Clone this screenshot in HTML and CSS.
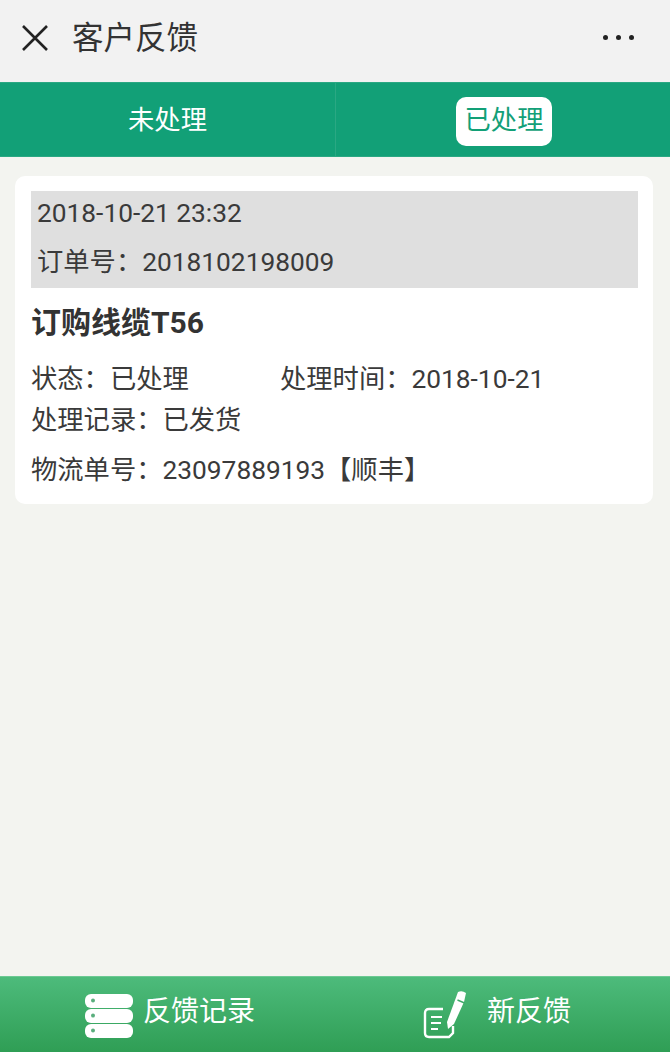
FILE: index.html
```html
<!DOCTYPE html>
<html lang="zh-CN">
<head>
    <meta charset="UTF-8">
    <title>客户反馈</title>
    <link rel="stylesheet" href="styles.css">
</head>
<body>

    <header class="topbar">
        <svg class="close-icon" width="30" height="30" viewBox="0 0 30 30">
            <path d="M3 3 L27 27 M27 3 L3 27" stroke="#222" stroke-width="2.6" fill="none"/>
        </svg>
        <div class="page-title">客户反馈</div>
        <div class="more">
            <span class="dot"></span>
            <span class="dot"></span>
            <span class="dot"></span>
        </div>
    </header>

    <nav class="tabs">
        <div class="tab tab-first"><span class="tab-label">未处理</span></div>
        <div class="tab"><span class="tab-label active">已处理</span></div>
    </nav>

    <main class="content">
        <div class="card">
            <div class="card-head">
                <div class="head-line">2018-10-21 23:32</div>
                <div class="head-line">订单号：2018102198009</div>
            </div>
            <div class="card-title">订购线缆T56</div>
            <div class="status-row">
                <div class="status-cell">状态：已处理</div>
                <div>处理时间：2018-10-21</div>
            </div>
            <div class="record-row">处理记录：已发货</div>
            <div class="ship-row">物流单号：23097889193【顺丰】</div>
        </div>
    </main>

    <footer class="bottombar">
        <div class="bottom-btn btn-left">
            <svg class="list-icon" width="48" height="44" viewBox="0 0 48 44">
                <g fill="#fff">
                    <rect x="0" y="0" width="48" height="14" rx="6"/>
                    <rect x="0" y="15" width="48" height="14" rx="6"/>
                    <rect x="0" y="30" width="48" height="14" rx="6"/>
                </g>
                <g fill="#5aae7d">
                    <circle cx="8" cy="6.5" r="2"/>
                    <circle cx="8" cy="21.5" r="2"/>
                    <circle cx="8" cy="36.5" r="2"/>
                </g>
            </svg>
            <span class="btn-text">反馈记录</span>
        </div>
        <div class="bottom-btn btn-right">
            <svg width="44" height="50" viewBox="0 0 44 50">
                <path d="M20 19 H6 Q2 19 2 23 V43 Q2 47 6 47 H26 L30 43 V36" stroke="#fff" stroke-width="2.4" fill="none"/>
                <path d="M8 27 H19 M8 33 H18 M8 39 H15" stroke="#fff" stroke-width="2.2" fill="none"/>
                <path d="M35 2 Q39 0 43 3 L41 12 L31 34 L25 39 L24 32 Z" fill="#fff"/>
                <path d="M34.5 10 L41.5 13" stroke="#3dab68" stroke-width="1.4" fill="none"/>
            </svg>
            <span class="btn-text">新反馈</span>
        </div>
    </footer>

</body>
</html>
```

FILE: styles.css
```css
* {
    box-sizing: border-box;
}
html, body {
    height: 100%;
}
body {
    margin: 0;
    display: flex;
    flex-direction: column;
    font-family: Roboto, "Noto Sans CJK SC", sans-serif;
    background-color: #f3f4f0;
    color: #3a3a3a;
}
.topbar {
    height: 82px;
    display: flex;
    align-items: center;
    padding: 0 36px 7px 20px;
    background-color: #f2f2f2;
}
.page-title {
    margin-left: 22px;
    padding-top: 3px;
    font-size: 31.5px;
    line-height: 40px;
    color: #333;
}
.more {
    margin-left: auto;
    display: flex;
    gap: 8px;
}
.dot {
    width: 5px;
    height: 5px;
    border-radius: 50%;
    background-color: #222;
}
.tabs {
    height: 75px;
    display: flex;
    background-color: #12a077;
    border-top: 1px solid #2aa883;
    border-bottom: 1px solid #2aa883;
}
.tab {
    flex: 1;
    display: flex;
    align-items: center;
    justify-content: center;
    font-size: 26.3px;
    color: #fff;
}
.tab-first {
    flex: none;
    width: 336px;
    border-right: 1px solid #2aa883;
}
.tab-label {
    margin-top: 3px;
    padding: 5px 9px 7px;
    line-height: 37px;
}
.tab-label.active {
    margin-left: 2px;
    background-color: #fff;
    color: #12a077;
    border-radius: 10px;
}
.content {
    flex: 1;
    padding: 19px 17px 0 15px;
}
.card {
    height: 328px;
    padding: 15px 15px 0 16px;
    background: #fff;
    border-radius: 10px;
    font-size: 26.3px;
}
.card-head {
    height: 97px;
    padding: 0 6px;
    background-color: #dfdfdf;
}
.head-line {
    height: 48px;
    line-height: 45px;
}
.head-line + .head-line {
    line-height: 46px;
}
.card-title {
    margin-top: 14px;
    height: 41px;
    line-height: 41px;
    font-size: 30px;
    font-weight: bold;
    color: #333;
}
.status-row {
    display: flex;
    margin-top: 16px;
    line-height: 41px;
}
.status-cell {
    width: 249px;
}
.record-row {
    line-height: 41px;
}
.ship-row {
    margin-top: 9px;
    line-height: 41px;
}
.bottombar {
    height: 76px;
    display: flex;
    background: linear-gradient(#4dbb7b, #2f9e55);
    border-top: 1px solid #6cc993;
    color: #fff;
    font-size: 28px;
}
.bottom-btn {
    flex: 1;
    display: flex;
    align-items: center;
}
.btn-text {
    margin-bottom: 11px;
}
.list-icon {
    margin-top: 2px;
}
.btn-left {
    padding-left: 85px;
    gap: 10px;
}
.btn-right {
    padding-left: 91px;
    gap: 20px;
}
```
